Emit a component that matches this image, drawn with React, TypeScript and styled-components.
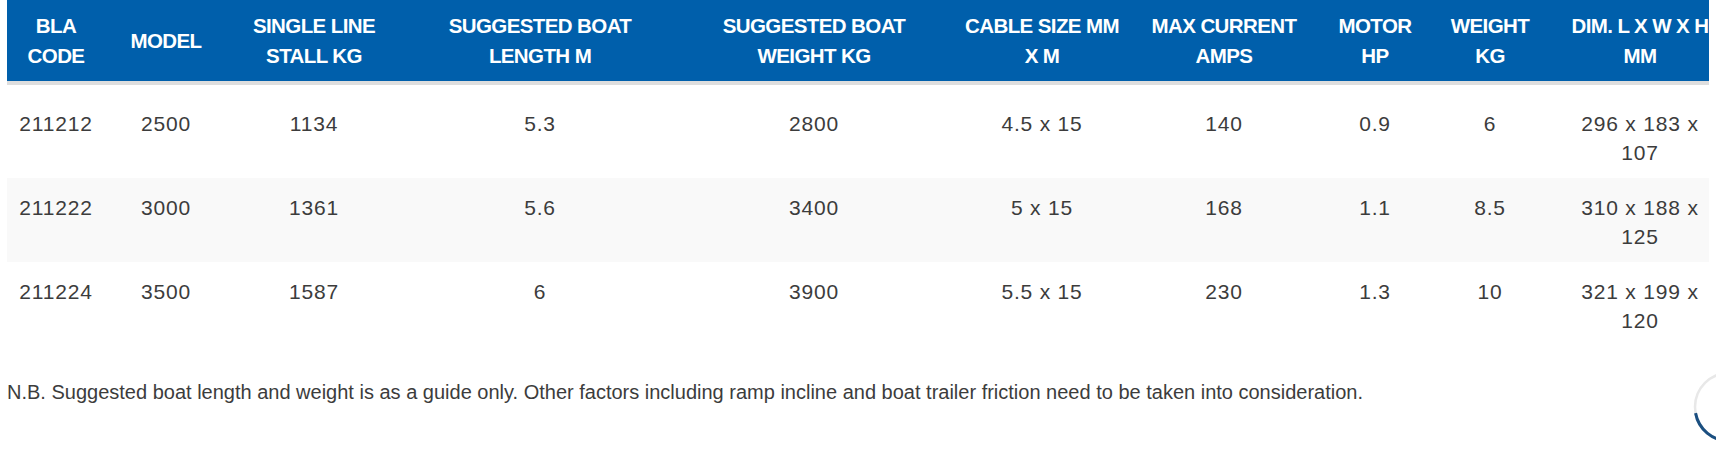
import React from 'react';
import styled, { createGlobalStyle } from 'styled-components';

const GlobalStyle = createGlobalStyle`
    html, body {
        margin: 0;
        padding: 0;
        background: #fff;
        overflow: hidden;
    }
`;

const Page = styled.div`
    padding: 0 7px;
    font-family: 'Liberation Sans', Arial, sans-serif;
    color: #3c3c3c;
`;

const TableWrap = styled.div`
    width: 100%;
    overflow: hidden;
`;

const Table = styled.table`
    width: 1730px;
    table-layout: fixed;
    border-collapse: collapse;
`;

const HeadRow = styled.tr`
    background: #005fab;
    border-bottom: 4px solid #dedede;
`;

const Th = styled.th`
    height: 83px;
    padding: 0 4px;
    box-sizing: border-box;
    font-family: 'Liberation Sans', Arial, sans-serif;
    font-weight: 700;
    font-size: 20.5px;
    line-height: 29.5px;
    color: #fff;
    text-align: center;
    vertical-align: middle;
    letter-spacing: -0.6px;
`;

const HeadLine = styled.span`
    display: block;
    white-space: nowrap;
`;

const SpacerCell = styled.td`
    height: 9px;
    padding: 0;
`;

const Row = styled.tr<{ $striped?: boolean }>`
    background: ${(p) => (p.$striped ? '#f9f9f9' : '#fff')};
`;

const Td = styled.td`
    height: 84px;
    padding: 15px 6px 11px;
    box-sizing: border-box;
    font-size: 21px;
    line-height: 29px;
    letter-spacing: 0.8px;
    text-align: center;
    vertical-align: top;
    color: #3c3c3c;
`;

const Wrap = styled.span<{ $max?: number }>`
    display: inline-block;
    max-width: ${(p) => (p.$max ? `${p.$max}px` : 'none')};
`;

const Note = styled.p`
    margin: 32px 0 0;
    font-size: 20px;
    line-height: 29px;
    color: #3c3c3c;
`;

const Progress = styled.svg`
    position: fixed;
    right: -49px;
    top: 371px;
    width: 72px;
    height: 72px;
`;

const columns = [
    { width: 98, label: ['BLA', 'CODE'] },
    { width: 122, label: ['MODEL'] },
    { width: 174, label: ['SINGLE LINE', 'STALL KG'] },
    { width: 278, label: ['SUGGESTED BOAT', 'LENGTH M'] },
    { width: 270, label: ['SUGGESTED BOAT', 'WEIGHT KG'] },
    { width: 186, label: ['CABLE SIZE MM', 'X M'] },
    { width: 178, label: ['MAX CURRENT', 'AMPS'] },
    { width: 124, label: ['MOTOR', 'HP'] },
    { width: 106, label: ['WEIGHT', 'KG'] },
    { width: 194, label: ['DIM. L X W X H', 'MM'], max: 135 },
];

const rows = [
    ['211212', '2500', '1134', '5.3', '2800', '4.5 x 15', '140', '0.9', '6', '296 x 183 x 107'],
    ['211222', '3000', '1361', '5.6', '3400', '5 x 15', '168', '1.1', '8.5', '310 x 188 x 125'],
    ['211224', '3500', '1587', '6', '3900', '5.5 x 15', '230', '1.3', '10', '321 x 199 x 120'],
];

const ScrollProgress: React.FC<{ value: number }> = ({ value }) => {
    const r = 34;
    const len = 2 * Math.PI * r;
    return (
        <Progress viewBox="0 0 72 72">
            <circle cx="36" cy="36" r={r} fill="#fff" stroke="#e8e8e8" strokeWidth="2.5" />
            <circle
                cx="36"
                cy="36"
                r={r}
                fill="none"
                stroke="#1b4f80"
                strokeWidth="3"
                strokeDasharray={`${len * value} ${len}`}
                transform="rotate(-90 36 36)"
            />
        </Progress>
    );
};

export default function App() {
    return (
        <Page>
            <GlobalStyle />
            <TableWrap>
                <Table>
                    <colgroup>
                        {columns.map((c, i) => (
                            <col key={i} style={{ width: c.width }} />
                        ))}
                    </colgroup>
                    <thead>
                        <HeadRow>
                            {columns.map((c, i) => (
                                <Th key={i}>
                                    {c.label.map((l) => (
                                        <HeadLine key={l}>{l}</HeadLine>
                                    ))}
                                </Th>
                            ))}
                        </HeadRow>
                    </thead>
                    <tbody>
                        <tr>
                            <SpacerCell colSpan={columns.length} />
                        </tr>
                        {rows.map((row, ri) => (
                            <Row key={ri} $striped={ri === 1}>
                                {row.map((cell, ci) => (
                                    <Td key={ci}>
                                        <Wrap $max={columns[ci].max}>{cell}</Wrap>
                                    </Td>
                                ))}
                            </Row>
                        ))}
                    </tbody>
                </Table>
            </TableWrap>
            <Note>
                N.B. Suggested boat length and weight is as a guide only. Other factors including ramp incline and
                boat trailer friction need to be taken into consideration.
            </Note>
            <ScrollProgress value={0.72} />
        </Page>
    );
}
